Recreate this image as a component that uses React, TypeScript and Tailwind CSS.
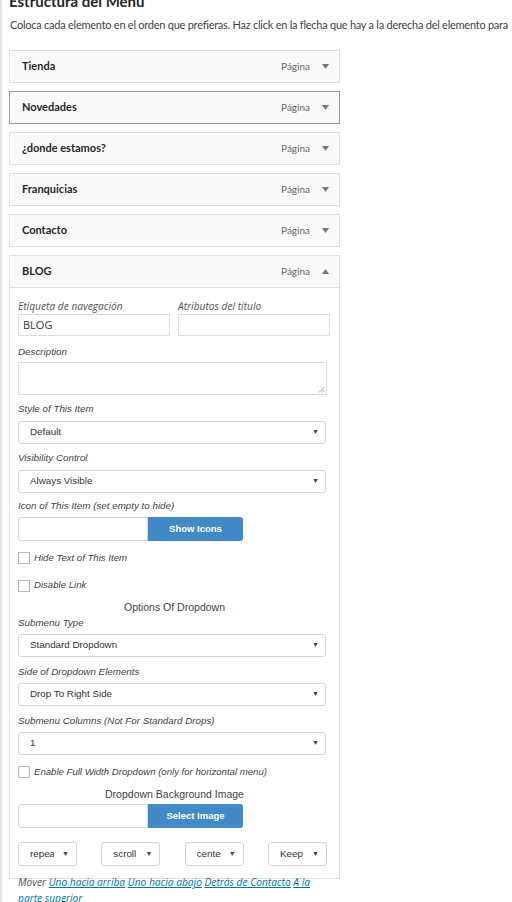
import React from "react";

const SEGOE = "font-['Lato','Open_Sans',sans-serif]";
const OPEN = "font-['Open_Sans','Noto_Sans',sans-serif]";
const ARIAL = "font-['Liberation_Sans',Arial,sans-serif]";

const ITEMS = [
  { title: "Tienda", active: false },
  { title: "Novedades", active: true },
  { title: "¿donde estamos?", active: false },
  { title: "Franquicias", active: false },
  { title: "Contacto", active: false },
];

function Caret({ up = false }: { up?: boolean }) {
  return (
    <svg width="7" height="5" viewBox="0 0 7 5" className="shrink-0">
      {up ? <path d="M0 5 L3.5 0 L7 5 Z" fill="#777" /> : <path d="M0 0 L7 0 L3.5 5 Z" fill="#777" />}
    </svg>
  );
}

function MenuHeader({ title, active, up }: { title: string; active?: boolean; up?: boolean }) {
  return (
    <div
      className={`flex h-[33px] items-center border bg-[#fafafa] pl-[12px] pr-[10px] ${
        active ? "border-[#999]" : "border-[#dfdfdf]"
      }`}
    >
      <span className={`flex-1 text-[11px] font-bold text-[#23282d] ${SEGOE}`}>{title}</span>
      <span className={`mr-[12px] text-[10px] text-[#666] ${SEGOE}`}>Página</span>
      <Caret up={up} />
    </div>
  );
}

function Label({ children, className = "" }: { children: React.ReactNode; className?: string }) {
  return <div className={`text-[9.8px] italic leading-[14px] text-[#444] ${ARIAL} ${className}`}>{children}</div>;
}

function Select({ value }: { value: string }) {
  return (
    <div className="flex h-[23px] w-[308px] items-center rounded-[3px] border border-[#d4d4d4] bg-white pl-[11px] pr-[6px]">
      <span className={`flex-1 text-[9.8px] text-[#333] ${ARIAL}`}>{value}</span>
      <span className="text-[7px] text-[#444]">▼</span>
    </div>
  );
}

function SmallSelect({ value }: { value: string }) {
  return (
    <div className="flex h-[24px] w-[59px] items-center rounded-[3px] border border-[#d4d4d4] bg-white pl-[11px] pr-[7px]">
      <span className={`w-[24px] overflow-hidden whitespace-nowrap text-[9.8px] text-[#333] ${ARIAL}`}>{value}</span>
      <span className="ml-auto text-[7px] text-[#444]">▼</span>
    </div>
  );
}

function Checkbox({ label }: { label: string }) {
  return (
    <div className="flex items-center gap-[4px]">
      <span className="h-[12px] w-[12px] border border-[#b4b9be] bg-white" />
      <span className={`text-[9.6px] italic text-[#444] ${ARIAL}`}>{label}</span>
    </div>
  );
}

function InputButton({ label }: { label: string }) {
  return (
    <div className="flex h-[24px]">
      <div className="w-[130px] rounded-l-[3px] border border-[#d4d4d4] bg-white" />
      <div
        className={`flex w-[95px] items-center justify-center rounded-r-[3px] bg-[#4189c7] text-[9.5px] font-bold text-white ${ARIAL}`}
      >
        {label}
      </div>
    </div>
  );
}

export default function App() {
  return (
    <div className="h-[902px] w-[512px] overflow-hidden border-l-2 border-[#e4e4e4] bg-white pl-[7px]">
      <h2 className={`-mt-[9px] whitespace-nowrap text-[15px] font-bold leading-[20px] text-[#23282d] ${SEGOE}`}>
        Estructura del Menú
      </h2>
      <p
        className={`mt-[6px] whitespace-nowrap pl-[1px] text-[11px] leading-[16px] tracking-[-0.25px] text-[#444] ${SEGOE}`}
      >
        Coloca cada elemento en el orden que prefieras. Haz click en la flecha que hay a la derecha del elemento para
      </p>

      <div className="mt-[17px] flex w-[331px] flex-col gap-[8px]">
        {ITEMS.map((item) => (
          <MenuHeader key={item.title} title={item.title} active={item.active} />
        ))}

        <div>
          <MenuHeader title="BLOG" up />
          <div className="border border-t-0 border-[#dfdfdf] px-[8px] pb-[12px] pt-[11px]">
            <div className="flex gap-[8px]">
              <div className="w-[152px]">
                <div className={`text-[10.2px] italic leading-[14px] text-[#555] ${OPEN}`}>Etiqueta de navegación</div>
                <div
                  className={`mt-[1px] flex h-[22px] items-center border border-[#ddd] px-[4px] text-[11px] text-[#32373c] ${OPEN}`}
                >
                  BLOG
                </div>
              </div>
              <div className="w-[152px]">
                <div className={`text-[10.2px] italic leading-[14px] text-[#555] ${OPEN}`}>Atributos del título</div>
                <div className="mt-[1px] h-[22px] border border-[#ddd]" />
              </div>
            </div>

            <Label className="mt-[9px]">Description</Label>
            <div className="relative mt-[3px] h-[33px] w-[309px] border border-[#ddd]">
              <svg width="7" height="7" viewBox="0 0 7 7" className="absolute bottom-[1px] right-[1px]">
                <path d="M6.5 1 L1 6.5 M6.5 4 L4 6.5" stroke="#888" strokeWidth="0.8" />
              </svg>
            </div>

            <Label className="mt-[7px]">Style of This Item</Label>
            <div className="mt-[5px]">
              <Select value="Default" />
            </div>

            <Label className="mt-[7px]">Visibility Control</Label>
            <div className="mt-[5px]">
              <Select value="Always Visible" />
            </div>

            <Label className="mt-[6px]">Icon of This Item (set empty to hide)</Label>
            <div className="mt-[4px]">
              <InputButton label="Show Icons" />
            </div>

            <div className="mt-[10px]">
              <Checkbox label="Hide Text of This Item" />
            </div>
            <div className="mt-[13px]">
              <Checkbox label="Disable Link" />
            </div>

            <div className={`mt-[7px] text-center text-[10.5px] leading-[14px] text-[#444] ${ARIAL}`}>Options Of Dropdown</div>

            <Label className="mt-[2px]">Submenu Type</Label>
            <div className="mt-[4px]">
              <Select value="Standard Dropdown" />
            </div>

            <Label className="mt-[8px]">Side of Dropdown Elements</Label>
            <div className="mt-[4px]">
              <Select value="Drop To Right Side" />
            </div>

            <Label className="mt-[8px]">Submenu Columns (Not For Standard Drops)</Label>
            <div className="mt-[4px]">
              <Select value="1" />
            </div>

            <div className="mt-[10px]">
              <Checkbox label="Enable Full Width Dropdown (only for horizontal menu)" />
            </div>

            <div className={`mt-[8px] text-center text-[10.5px] leading-[14px] text-[#444] ${ARIAL}`}>
              Dropdown Background Image
            </div>
            <div className="mt-[3px]">
              <InputButton label="Select Image" />
            </div>

            <div className="mt-[14px] flex w-[309px] justify-between">
              <SmallSelect value="repeat" />
              <SmallSelect value="scroll" />
              <SmallSelect value="center" />
              <SmallSelect value="Keep" />
            </div>
          </div>
          <p className={`-mt-[5px] w-[310px] pl-[9px] text-[10.2px] italic leading-[16px] text-[#555] ${OPEN}`}>
            Mover <a className="text-[#0073aa] underline">Uno hacia arriba</a>{" "}
            <a className="text-[#0073aa] underline">Uno hacia abajo</a>{" "}
            <a className="text-[#0073aa] underline">Detrás de Contacto</a>{" "}
            <a className="text-[#0073aa] underline">A la parte superior</a>
          </p>
        </div>
      </div>
    </div>
  );
}
